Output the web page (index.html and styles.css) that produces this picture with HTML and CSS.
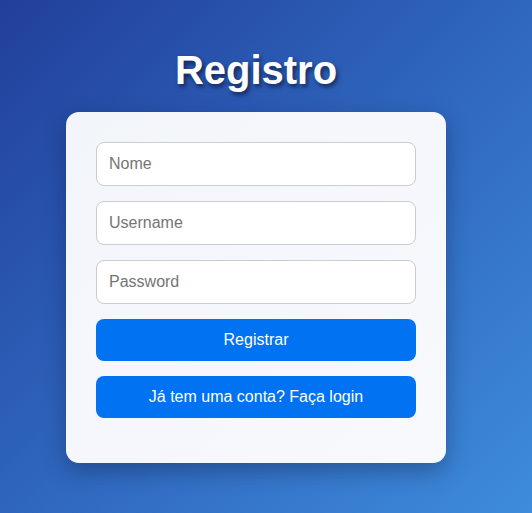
FILE: index.html
```html
<!DOCTYPE html>
<html lang="pt">
<head>
<meta charset="utf-8">
<title>Registro</title>
<link rel="stylesheet" href="styles.css">
</head>
<body>
<div class="page">
  <h1 class="title">Registro</h1>
  <form class="card">
    <input class="field" type="text" placeholder="Nome">
    <input class="field" type="text" placeholder="Username">
    <input class="field" type="password" placeholder="Password">
    <button class="btn" type="button">Registrar</button>
    <button class="btn" type="button">Já tem uma conta? Faça login</button>
  </form>
</div>
</body>
</html>
```
FILE: styles.css
```css
html, body {
  margin: 0;
  height: 100%;
}
body {
  background: linear-gradient(135deg, #213f9b 0%, #2f66bd 50%, #3e8cdb 100%);
  font-family: "Liberation Sans", Arial, sans-serif;
  overflow: hidden;
}
.page {
  box-sizing: border-box;
  width: 512px;
  padding-top: 47px;
  display: flex;
  flex-direction: column;
  align-items: center;
}
.title {
  margin: 0 0 19px;
  font-size: 40px;
  line-height: 46px;
  font-weight: bold;
  color: #fff;
  text-shadow: 2px 3px 4px rgba(0, 0, 20, 0.55);
}
.card {
  box-sizing: border-box;
  width: 380px;
  padding: 30px 30px 45px;
  background: linear-gradient(135deg, #f2f5fa, #f7f9fd);
  border-radius: 13px;
  box-shadow: 0 8px 22px rgba(10, 20, 60, 0.35);
  display: flex;
  flex-direction: column;
  gap: 15px;
}
.field {
  box-sizing: border-box;
  height: 44px;
  width: 100%;
  padding: 0 12px;
  border: 1px solid #cccccc;
  border-radius: 8px;
  background: #fff;
  font-family: inherit;
  font-size: 16px;
  color: #333;
  outline: none;
}
.field::placeholder {
  color: #757575;
}
.btn {
  height: 42px;
  width: 100%;
  border: none;
  border-radius: 8px;
  background: #0072f2;
  color: #fff;
  font-family: inherit;
  font-size: 16px;
  cursor: pointer;
}
```
